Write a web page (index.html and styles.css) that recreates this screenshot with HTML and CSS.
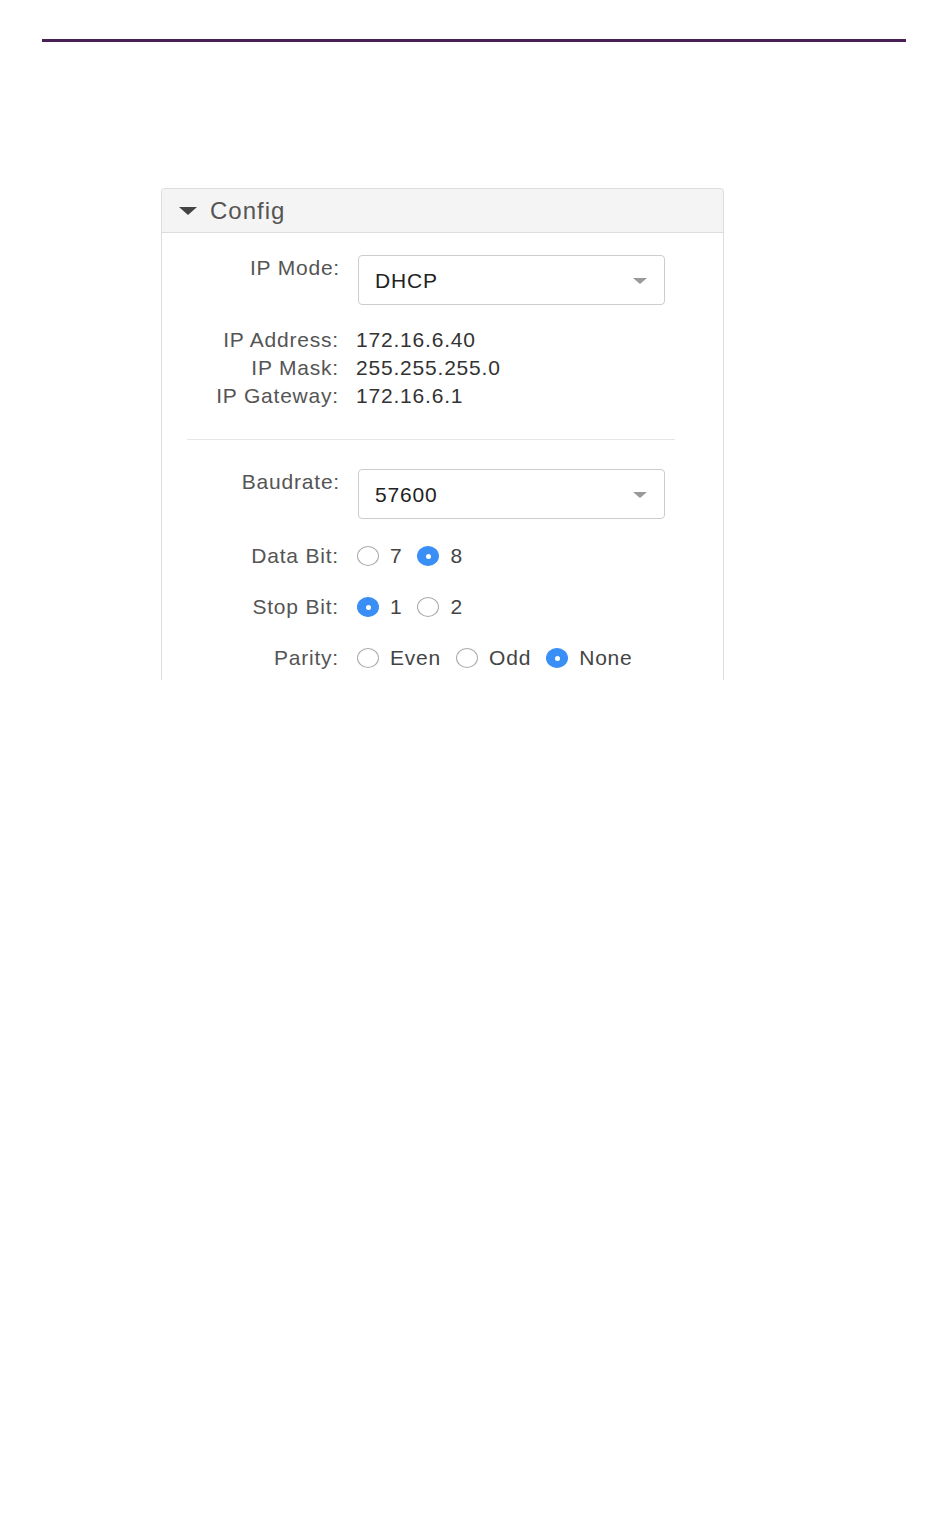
FILE: index.html
```html
<!DOCTYPE html>
<html lang="en">
<head>
    <meta charset="UTF-8">
    <meta name="viewport" content="width=device-width, initial-scale=1.0">
    <title>Config</title>
    <link rel="stylesheet" href="styles.css">
</head>
<body>
    <div class="top-rule"></div>

    <div class="panel">
        <div class="panel-header">
            <svg class="caret" width="18" height="8" viewBox="0 0 18 8"><polygon points="0,0 18,0 9,8" fill="#444"/></svg>
            <span>Config</span>
        </div>

        <div class="panel-body">
            <div class="row row-select">
                <label class="field-label">IP Mode:</label>
                <div class="select">
                    <span>DHCP</span>
                    <svg width="14" height="6" viewBox="0 0 14 6"><polygon points="0,0 14,0 7,6" fill="#999"/></svg>
                </div>
            </div>

            <div class="info">
                <div class="row row-info">
                    <span class="field-label">IP Address:</span>
                    <span class="value">172.16.6.40</span>
                </div>
                <div class="row row-info">
                    <span class="field-label">IP Mask:</span>
                    <span class="value">255.255.255.0</span>
                </div>
                <div class="row row-info">
                    <span class="field-label">IP Gateway:</span>
                    <span class="value">172.16.6.1</span>
                </div>
            </div>

            <hr class="divider">

            <div class="row row-select">
                <label class="field-label">Baudrate:</label>
                <div class="select">
                    <span>57600</span>
                    <svg width="14" height="6" viewBox="0 0 14 6"><polygon points="0,0 14,0 7,6" fill="#999"/></svg>
                </div>
            </div>

            <div class="row row-radio first">
                <span class="field-label">Data Bit:</span>
                <div class="radios">
                    <span class="radio"></span><span class="opt">7</span>
                    <span class="radio checked"></span><span class="opt">8</span>
                </div>
            </div>

            <div class="row row-radio">
                <span class="field-label">Stop Bit:</span>
                <div class="radios">
                    <span class="radio checked"></span><span class="opt">1</span>
                    <span class="radio"></span><span class="opt">2</span>
                </div>
            </div>

            <div class="row row-radio">
                <span class="field-label">Parity:</span>
                <div class="radios">
                    <span class="radio"></span><span class="opt">Even</span>
                    <span class="radio"></span><span class="opt">Odd</span>
                    <span class="radio checked"></span><span class="opt">None</span>
                </div>
            </div>
        </div>
    </div>
</body>
</html>
```

FILE: styles.css
```css
* {
    margin: 0;
    padding: 0;
    box-sizing: border-box;
}

body {
    font-family: 'Liberation Sans', Arial, sans-serif;
    background-color: #fff;
    color: #333;
}

.top-rule {
    margin: 39px 0 0 42px;
    width: 864px;
    height: 3px;
    background-color: #4a1f55;
}

/* Panel */
.panel {
    margin: 146px 0 0 161px;
    width: 563px;
    height: 492px;
    border: 1px solid #ddd;
    border-bottom: none;
    border-radius: 4px 4px 0 0;
    overflow: hidden;
}

.panel-header {
    height: 44px;
    background-color: #f4f4f4;
    border-bottom: 1px solid #ddd;
    display: flex;
    align-items: center;
    padding-left: 17px;
    gap: 13px;
    font-size: 24px;
    letter-spacing: 1px;
    color: #555;
}

.caret {
    margin-top: 1px;
}

.panel-body {
    font-size: 21px;
    letter-spacing: 0.8px;
}

.row {
    display: flex;
    gap: 17px;
}

.field-label {
    width: 177px;
    text-align: right;
    color: #555;
    white-space: nowrap;
}

.row-select {
    margin-top: 22px;
    align-items: flex-start;
}

.row-select .field-label {
    line-height: 26px;
    padding-right: 1px;
    width: 179px;
}

.select {
    width: 307px;
    height: 50px;
    border: 1px solid #ccc;
    border-radius: 4px;
    display: flex;
    align-items: center;
    justify-content: space-between;
    padding: 2px 17px 0 16px;
    color: #222;
}

.info {
    margin-top: 21px;
}

.row-info {
    line-height: 28px;
}

.value {
    color: #333;
}

.divider {
    border: none;
    border-top: 1px solid #e6e6e6;
    margin: 29px 48px 0 25px;
}

.divider + .row-select {
    margin-top: 29px;
}

.row-radio {
    margin-top: 21px;
    height: 30px;
    align-items: center;
}

.row-radio.first {
    margin-top: 22px;
}

.radios {
    display: flex;
    align-items: center;
    margin-left: 1px;
}

.radio {
    width: 22px;
    height: 20px;
    border: 1px solid #aaa;
    border-radius: 50%;
    background: #fff;
    margin-right: 11px;
    display: flex;
    align-items: center;
    justify-content: center;
}

.radio.checked {
    background-color: #3a8ff6;
    border-color: #3a8ff6;
}

.radio.checked::after {
    content: '';
    width: 5px;
    height: 5px;
    border-radius: 50%;
    background: #fff;
}

.opt {
    color: #444;
    margin-right: 15px;
}
```
